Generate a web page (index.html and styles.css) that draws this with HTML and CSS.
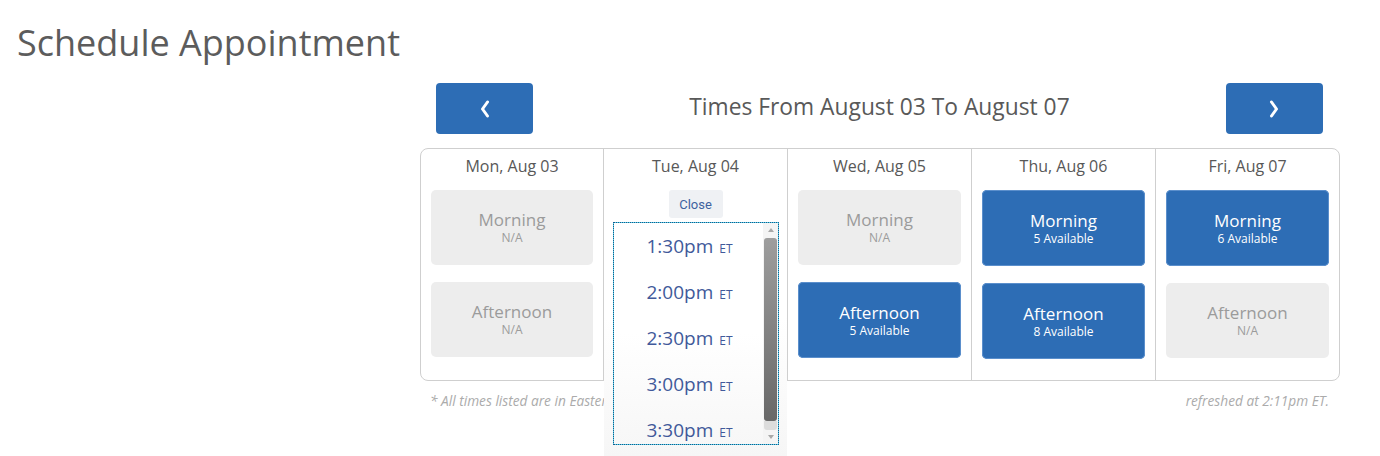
FILE: index.html
```html
<!DOCTYPE html>
<html>
<head>
<meta charset="utf-8">
<link rel="stylesheet" href="styles.css">
</head>
<body>
<h1 class="page-title">Schedule Appointment</h1>
<div class="scheduler">
  <div class="nav">
    <button class="nav-btn" aria-label="Previous"><svg width="12" height="18" viewBox="0 0 12 18"><polyline points="8.5,2 3.5,9 8.5,16" fill="none" stroke="#fff" stroke-width="3" stroke-linecap="round" stroke-linejoin="round"/></svg></button>
    <div class="range">Times From August 03 To August 07</div>
    <button class="nav-btn" aria-label="Next"><svg width="12" height="18" viewBox="0 0 12 18"><polyline points="3.5,2 8.5,9 3.5,16" fill="none" stroke="#fff" stroke-width="3" stroke-linecap="round" stroke-linejoin="round"/></svg></button>
  </div>
  <div class="week">
    <div class="day">
      <div class="day-name">Mon, Aug 03</div>
      <div class="slot na"><span class="slot-name">Morning</span><span class="slot-sub">N/A</span></div>
      <div class="slot na"><span class="slot-name">Afternoon</span><span class="slot-sub">N/A</span></div>
    </div>
    <div class="day open">
      <div class="expanded">
        <div class="day-name">Tue, Aug 04</div>
        <button class="close-btn">Close</button>
        <div class="listbox">
          <div class="options">
            <div class="option">1:30pm<span class="tz">ET</span></div>
            <div class="option">2:00pm<span class="tz">ET</span></div>
            <div class="option">2:30pm<span class="tz">ET</span></div>
            <div class="option">3:00pm<span class="tz">ET</span></div>
            <div class="option">3:30pm<span class="tz">ET</span></div>
          </div>
          <div class="scrollbar">
            <div class="arrow up"></div>
            <div class="track"><div class="thumb"></div></div>
            <div class="arrow down"></div>
          </div>
        </div>
      </div>
    </div>
    <div class="day">
      <div class="day-name">Wed, Aug 05</div>
      <div class="slot na"><span class="slot-name">Morning</span><span class="slot-sub">N/A</span></div>
      <div class="slot avail"><span class="slot-name">Afternoon</span><span class="slot-sub">5 Available</span></div>
    </div>
    <div class="day">
      <div class="day-name">Thu, Aug 06</div>
      <div class="slot avail"><span class="slot-name">Morning</span><span class="slot-sub">5 Available</span></div>
      <div class="slot avail"><span class="slot-name">Afternoon</span><span class="slot-sub">8 Available</span></div>
    </div>
    <div class="day">
      <div class="day-name">Fri, Aug 07</div>
      <div class="slot avail"><span class="slot-name">Morning</span><span class="slot-sub">6 Available</span></div>
      <div class="slot na"><span class="slot-name">Afternoon</span><span class="slot-sub">N/A</span></div>
    </div>
  </div>
  <div class="footnotes">
    <span>* All times listed are in Eastern Time.</span>
    <span>refreshed at 2:11pm ET.</span>
  </div>
</div>
</body>
</html>
```
FILE: styles.css
```css
body {
  margin: 0;
  padding: 0;
  min-height: 456px;
  background: #fff;
  font-family: "Open Sans", "Liberation Sans", sans-serif;
}

.page-title {
  margin: 21px 0 0 17px;
  font-size: 36px;
  line-height: 44px;
  font-weight: 400;
  color: #5c5c5c;
}

.scheduler {
  margin: 18px 0 0 420px;
  width: 920px;
}

.nav {
  display: flex;
  align-items: center;
  justify-content: space-between;
  padding: 0 17px 0 16px;
  height: 51px;
}

.nav-btn {
  width: 97px;
  height: 51px;
  border: none;
  border-radius: 4px;
  background: #2d6db5;
  display: flex;
  align-items: center;
  justify-content: center;
  padding: 0;
}

.range {
  font-size: 22.8px;
  color: #595959;
  line-height: 30px;
  margin-top: -4px;
}

.week {
  margin-top: 14px;
  display: grid;
  grid-template-columns: 182px 184px 184px 184px 184px;
  border: 1px solid #cfcfcf;
  border-radius: 8px;
  height: 231px;
}

.day {
  padding: 0 10px 0 10px;
  display: flex;
  flex-direction: column;
}

.day + .day {
  border-left: 1px solid #cfcfcf;
}

.day-name {
  text-align: center;
  font-size: 16px;
  line-height: 22px;
  color: #585858;
  padding-top: 6px;
  height: 41px;
  box-sizing: border-box;
}

.slot {
  height: 75px;
  border-radius: 5px;
  display: flex;
  flex-direction: column;
  align-items: center;
  justify-content: center;
  margin-bottom: 17px;
}

.slot.na {
  background: #ededed;
  color: #9b9b9b;
}

.slot.avail {
  background: #2d6db5;
  color: #fff;
  height: 76px;
  box-shadow: 0 0 0 1px #5b8fcc inset;
}

.slot-name {
  font-size: 17px;
  line-height: 20px;
}

.slot-sub {
  font-size: 12px;
  line-height: 15px;
}

.day.open {
  position: relative;
  padding: 0;
}

.expanded {
  position: absolute;
  top: 0;
  left: 0;
  right: 0;
  height: 307px;
  z-index: 2;
  background: linear-gradient(#ffffff 55%, #f6f6f6);
  display: flex;
  flex-direction: column;
  align-items: center;
}

.expanded .day-name {
  align-self: stretch;
}

.close-btn {
  width: 54px;
  height: 28px;
  border: none;
  border-radius: 3px;
  background: #eff1f4;
  color: #3e62a0;
  font-family: Roboto, "Liberation Sans", sans-serif;
  font-size: 13px;
  padding: 0;
}

.listbox {
  margin-top: 4px;
  width: 166px;
  height: 223px;
  box-sizing: border-box;
  border: 1px solid #4fd0ea;
  outline: 1px dotted #1d5a8a;
  outline-offset: -1px;
  background: linear-gradient(#ffffff 50%, #f7f7f7);
  display: flex;
  margin-left: 1px;
}

.options {
  flex: 1;
  overflow: hidden;
}

.option {
  height: 46px;
  display: flex;
  align-items: center;
  justify-content: center;
  color: #41599a;
  font-size: 19px;
  padding-left: 2px;
}

.tz {
  font-size: 12px;
  margin-left: 6px;
  margin-top: 5px;
}

.scrollbar {
  width: 15px;
  display: flex;
  flex-direction: column;
  background: #f4f4f4;
}

.arrow {
  height: 15px;
  display: flex;
  align-items: center;
  justify-content: center;
}

.arrow::before {
  content: "";
  border-left: 3px solid transparent;
  border-right: 3px solid transparent;
}

.arrow.up::before {
  border-bottom: 4px solid #a8a8a8;
}

.arrow.down::before {
  border-top: 4px solid #a8a8a8;
}

.track {
  flex: 1;
  padding: 0 1px;
  display: flex;
  flex-direction: column;
}

.thumb {
  height: 183px;
  border-radius: 3px;
  background: linear-gradient(#9e9e9e, #686868);
}

.track::after {
  content: "";
  height: 9px;
  border-radius: 0 0 3px 3px;
  background: #dcdcdc;
}

.footnotes {
  display: flex;
  justify-content: space-between;
  padding: 11px 11px 0 10px;
  font-size: 13.7px;
  font-style: italic;
  color: #ababab;
  line-height: 18px;
}
```
